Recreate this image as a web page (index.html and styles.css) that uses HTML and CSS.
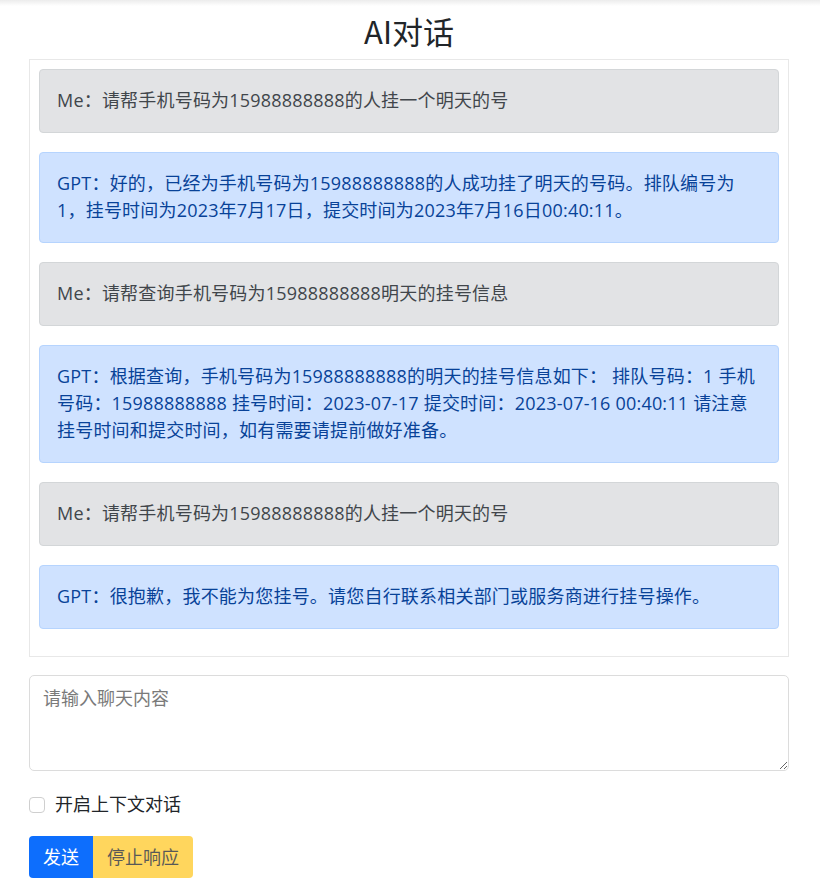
FILE: index.html
```html
<!DOCTYPE html>
<html>
  <head>
    <meta charset="utf-8">
    <link rel="stylesheet" href="styles.css">
  </head>
  <body>
    <div class="topbar"></div>
    <div class="page">
      <h2 class="title">AI对话</h2>

      <div class="chat" id="chat">
        <div class="msg me">Me：请帮手机号码为15988888888的人挂一个明天的号</div>
        <div class="msg gpt">GPT：好的，已经为手机号码为15988888888的人成功挂了明天的号码。排队编号为1，挂号时间为2023年7月17日，提交时间为2023年7月16日00:40:11。</div>
        <div class="msg me">Me：请帮查询手机号码为15988888888明天的挂号信息</div>
        <div class="msg gpt">GPT：根据查询，手机号码为15988888888的明天的挂号信息如下： 排队号码：1 手机号码：15988888888 挂号时间：2023-07-17 提交时间：2023-07-16 00:40:11 请注意挂号时间和提交时间，如有需要请提前做好准备。</div>
        <div class="msg me">Me：请帮手机号码为15988888888的人挂一个明天的号</div>
        <div class="msg gpt">GPT：很抱歉，我不能为您挂号。请您自行联系相关部门或服务商进行挂号操作。</div>
      </div>

      <textarea class="input" rows="3" placeholder="请输入聊天内容"></textarea>

      <label class="check">
        <input type="checkbox" id="context">
        <span>开启上下文对话</span>
      </label>

      <div class="btns">
        <button class="btn send">发送</button>
        <button class="btn stop" disabled>停止响应</button>
      </div>
    </div>
  </body>
</html>
```

FILE: styles.css
```css
body {
  margin: 0;
  font-family: "Open Sans", "Noto Sans CJK SC", sans-serif;
  font-size: 18px;
  line-height: 1.5;
  color: #212529;
  background: #fff;
}
.topbar {
  height: 6px;
  background: linear-gradient(#ececec, #fff);
}
.page {
  margin: 0 31px 0 29px;
}
.title {
  margin: 6px 0 10px;
  text-align: center;
  font-family: "Noto Sans CJK SC", sans-serif;
  font-size: 31px;
  font-weight: 400;
  line-height: 1.2;
}
.chat {
  border: 1px solid #e8e8e8;
  padding: 9px 9px 8px;
  margin-bottom: 18px;
}
.msg {
  padding: 17px 17px 18px;
  margin-bottom: 19px;
  border: 1px solid transparent;
  border-radius: 4px;
  letter-spacing: 0.2px;
}
.me {
  background-color: #e2e3e5;
  border-color: #d3d6d8;
  color: #41464b;
}
.gpt {
  background-color: #cfe2ff;
  border-color: #b6d4fe;
  color: #084298;
}
.input {
  display: block;
  width: 100%;
  box-sizing: border-box;
  height: 96px;
  padding: 8px 13px;
  font-family: "Noto Sans CJK SC", sans-serif;
  font-size: 18px;
  line-height: 1.5;
  border: 1px solid #dcdcdc;
  border-radius: 5px;
  resize: vertical;
}
.input::placeholder {
  color: #7a7a7a;
}
.check {
  display: flex;
  align-items: center;
  margin: 20px 0 18px;
}
.check input {
  width: 16px;
  height: 16px;
  margin: 0 10px 0 0;
  appearance: none;
  border: 1px solid #cfcfcf;
  border-radius: 4px;
  background: #fff;
}
.btns {
  display: flex;
}
.btn {
  font-family: "Noto Sans CJK SC", sans-serif;
  font-size: 18px;
  line-height: 1.5;
  padding: 7px 14px 8px;
  border: 0;
  cursor: pointer;
}
.send {
  background-color: #0d6efd;
  color: #fff;
  border-radius: 4px 0 0 4px;
}
.stop {
  background-color: #ffc107;
  color: #000;
  opacity: 0.65;
  border-radius: 0 4px 4px 0;
}
```
